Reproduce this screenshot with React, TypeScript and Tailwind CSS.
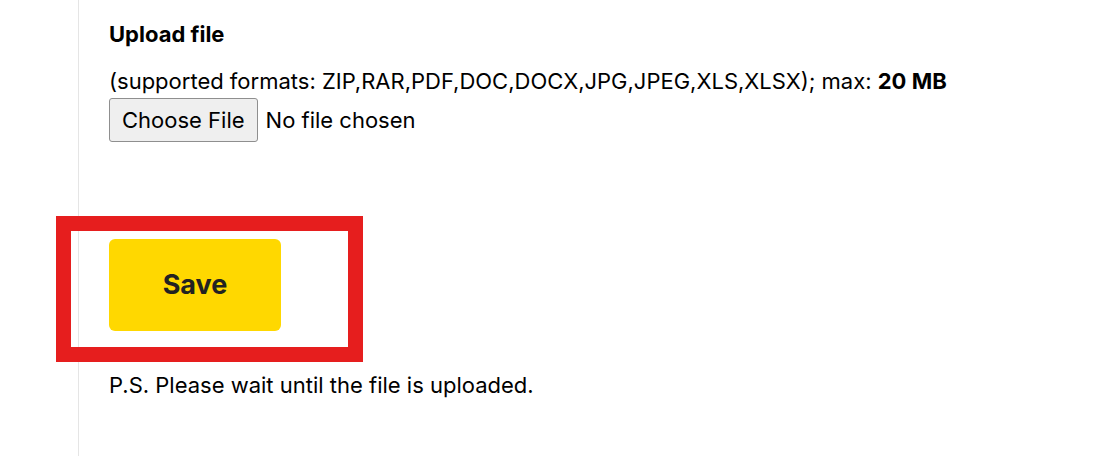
import React from "react";

const App = () => {
  return (
    <main className="h-[456px] w-full bg-white font-['Inter',sans-serif] text-black">
      <div className="ml-[78px] h-full border-l border-[#e5e5e5] pl-[30px] pt-[20px]">
        <h3 className="text-[22px] font-bold leading-[28px]">Upload file</h3>
        <p className="mt-[20px] text-[22px] leading-[26px]">
          (supported formats: ZIP,RAR,PDF,DOC,DOCX,JPG,JPEG,XLS,XLSX); max: <b>20 MB</b>
        </p>
        <input
          type="file"
          className="mt-[4px] block text-[22px] leading-[26px] file:mr-[8px] file:h-[44px] file:rounded-[3px] file:border file:border-[#8f8f8f] file:bg-[#efefef] file:px-[12px] file:text-[22px] file:text-black"
        />
        <div className="-ml-[53px] mt-[74px] w-[307px] border-[15px] border-[#e61e1e] pb-[16px] pl-[38px] pt-[8px]">
          <button className="h-[92px] w-[172px] rounded-md bg-[#ffd800] text-[27px] font-bold text-[#222]">
            Save
          </button>
        </div>
        <p className="mt-[10px] text-[22px] leading-[26px]">P.S. Please wait until the file is uploaded.</p>
      </div>
    </main>
  );
};

export default App;
